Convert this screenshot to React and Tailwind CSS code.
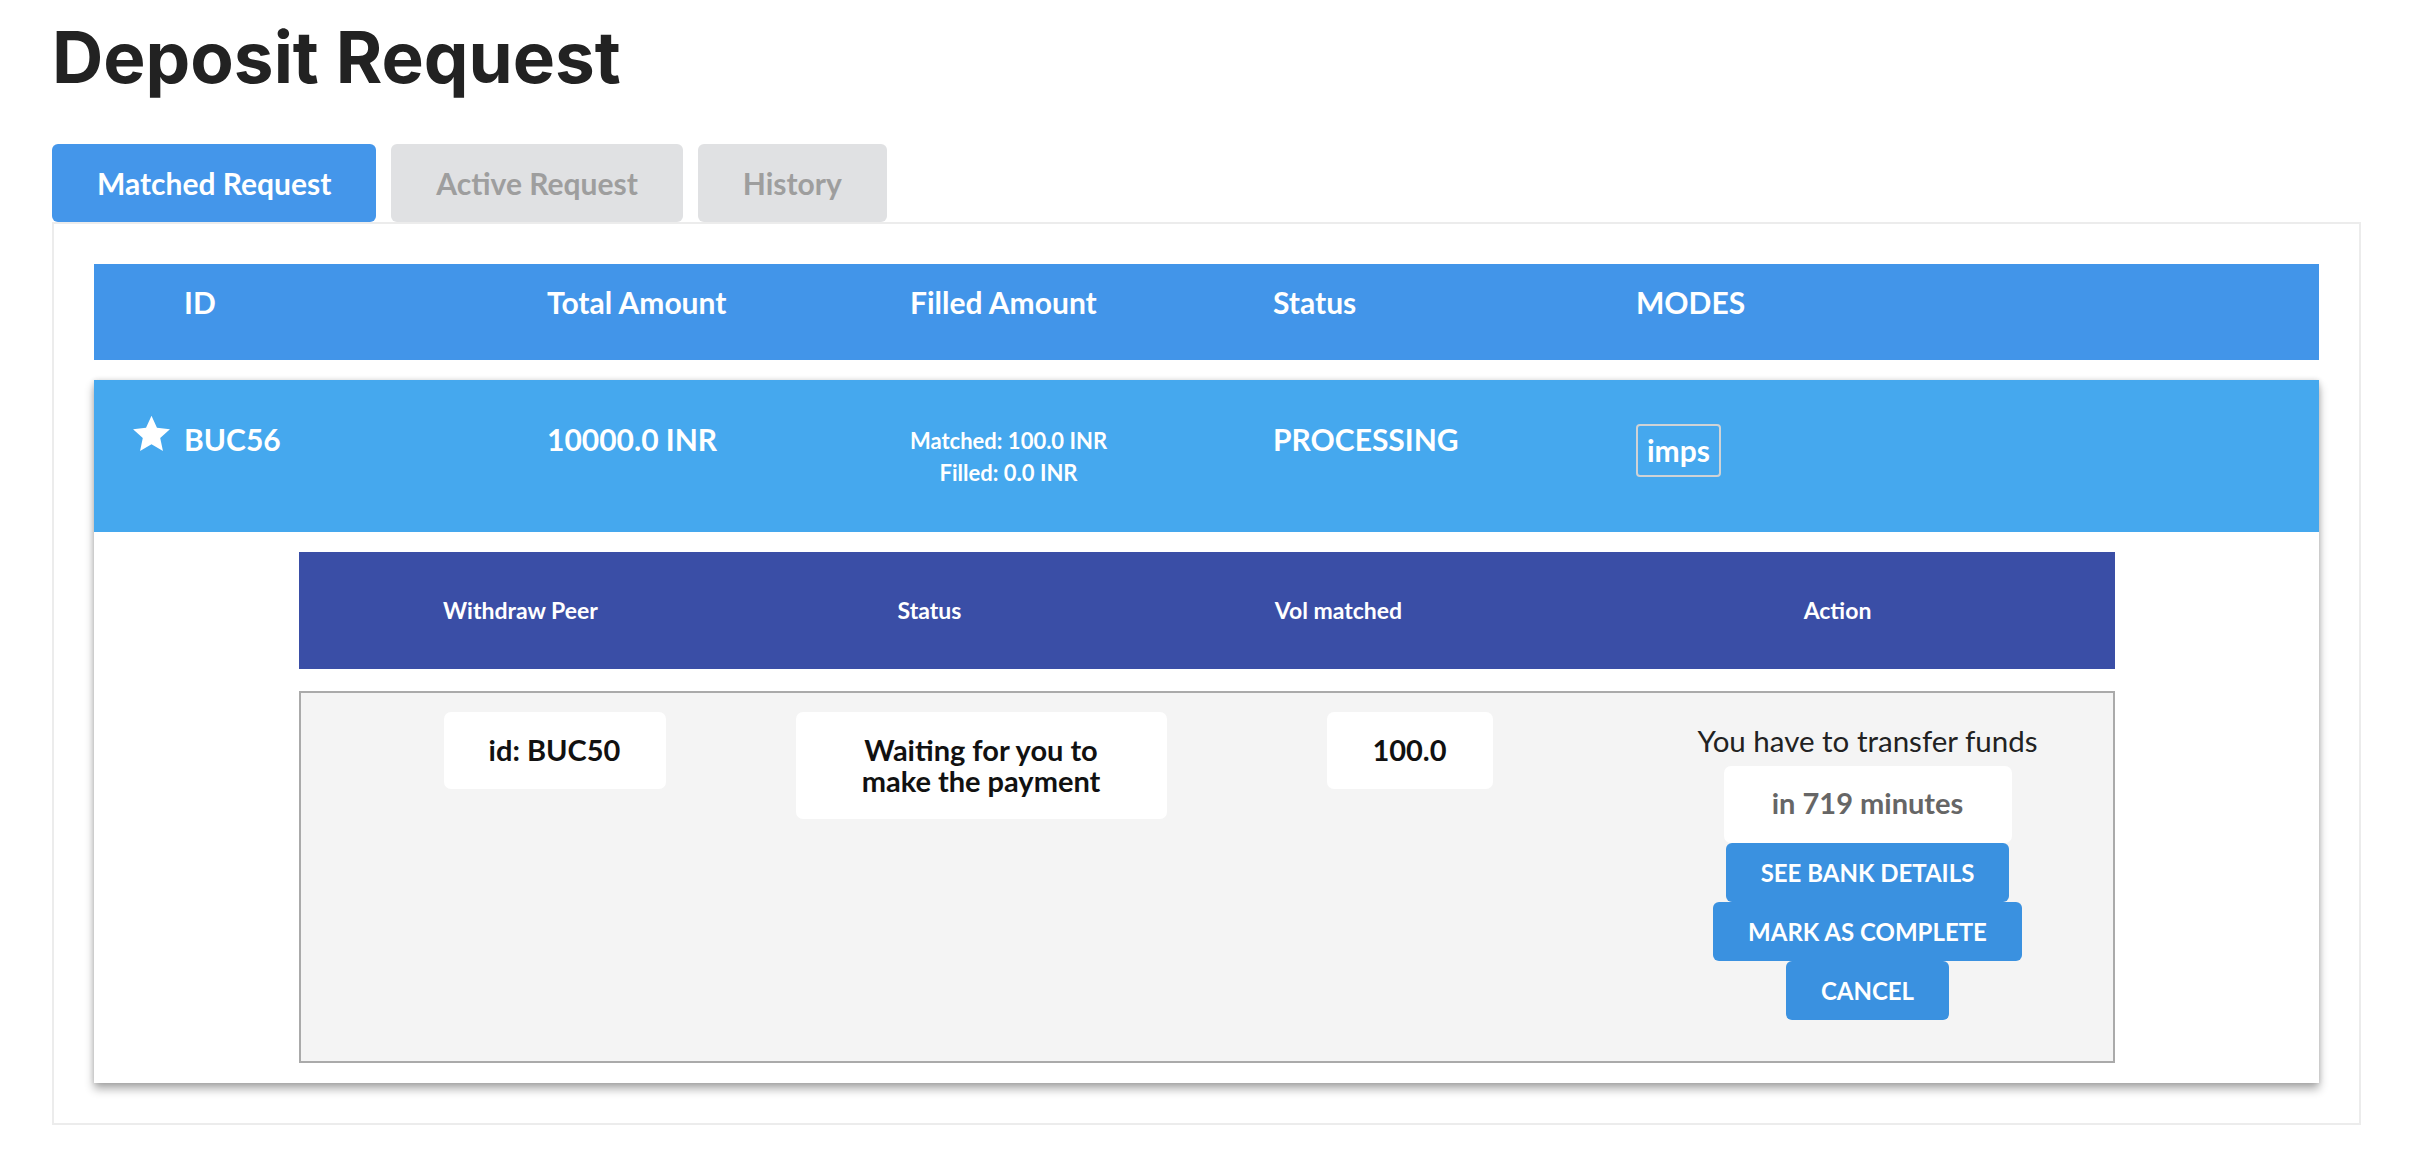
export default function App() {
  const cols = "w-[363px] shrink-0";
  return (
    <div className="min-h-screen bg-white pl-[52px] pr-[71px] pt-[22px] font-['Lato','Liberation_Sans',sans-serif]">
      <h1 className="font-['Inter','Liberation_Sans',sans-serif] text-[71px] font-bold leading-[71px] text-[#222]">
        Deposit Request
      </h1>
      <div className="mt-[51px] flex gap-[15px]">
        <div className="h-[78px] rounded-[6px] bg-[#4496ea] px-[45px] text-[30px] font-bold leading-[78px] text-white">
          Matched Request
        </div>
        <div className="h-[78px] rounded-[6px] bg-[#e0e1e3] px-[45px] text-[30px] font-bold leading-[78px] text-[#9e9e9e]">
          Active Request
        </div>
        <div className="h-[78px] rounded-[6px] bg-[#e0e1e3] px-[45px] text-[30px] font-bold leading-[78px] text-[#9e9e9e]">
          History
        </div>
      </div>
      <div className="border-2 border-[#ececec] bg-white p-[40px]">
        <div className="flex h-[96px] bg-[#4295e9] pl-[38px] pt-[20px] text-[30px] font-bold leading-[36px] text-white">
          <div className="w-[52px] shrink-0" />
          <div className={cols}>ID</div>
          <div className={cols}>Total Amount</div>
          <div className={cols}>Filled Amount</div>
          <div className={cols}>Status</div>
          <div className={cols}>MODES</div>
        </div>
        <div className="mt-[20px] bg-white shadow-[0_6px_9px_rgba(0,0,0,0.32),0_0_5px_rgba(0,0,0,0.14)]">
          <div className="flex h-[152px] bg-[#45a8ee] pl-[38px] pt-[41px] text-[30px] font-bold leading-[36px] text-white">
            <div className="w-[52px] shrink-0">
              <svg viewBox="0 0 24 24" className="-ml-[1px] -mt-[7px] h-[41px] w-[41px]" fill="white">
                <polygon points="12,1 15.2,8.1 22.8,8.9 17.1,14 18.7,21.6 12,17.7 5.3,21.6 6.9,14 1.2,8.9 8.8,8.1" />
              </svg>
            </div>
            <div className={cols}>BUC56</div>
            <div className={cols}>10000.0 INR</div>
            <div className={cols}>
              <div className="mt-[4px] inline-block text-center text-[22px] leading-[32px]">
                <div>Matched: 100.0 INR</div>
                <div>Filled: 0.0 INR</div>
              </div>
            </div>
            <div className={cols}>PROCESSING</div>
            <div className={cols}>
              <span className="mt-[3px] inline-block rounded-[4px] border-2 border-[#cfd3d6] px-[9px] py-[6px] leading-[37px]">
                imps
              </span>
            </div>
          </div>
          <div className="pt-[20px] pb-[20px]">
            <div className="mx-auto grid h-[117px] w-[1816px] grid-cols-[444px_374px_444px_554px] items-center bg-[#3a4ea6] text-center text-[23px] font-bold text-white">
              <div>Withdraw Peer</div>
              <div>Status</div>
              <div>Vol matched</div>
              <div>Action</div>
            </div>
            <div className="mx-auto mt-[22px] flex h-[372px] w-[1816px] items-start border-2 border-[#aaaaaa] bg-[#f4f4f4] pt-[19px]">
              <div className="ml-[143px] w-[222px] shrink-0 rounded-[7px] bg-white pt-[20px] pb-[22px] text-center text-[29px] font-bold leading-[35px] text-[#111]">
                id: BUC50
              </div>
              <div className="ml-[130px] w-[371px] shrink-0 rounded-[7px] bg-white pt-[22px] pb-[23px] text-center text-[29px] font-bold leading-[31px] text-[#111]">
                Waiting for you to
                <br />
                make the payment
              </div>
              <div className="ml-[160px] w-[166px] shrink-0 rounded-[7px] bg-white pt-[20px] pb-[22px] text-center text-[29px] font-bold leading-[35px] text-[#111]">
                100.0
              </div>
              <div className="ml-[195px] flex w-[360px] shrink-0 flex-col items-center pt-[8px]">
                <div className="text-[29.5px] leading-[42px] text-[#222]">You have to transfer funds</div>
                <div className="mt-[4px] w-[288px] rounded-[7px] bg-white pt-[19px] pb-[23px] text-center text-[29px] font-bold leading-[35px] text-[#666]">
                  in 719 minutes
                </div>
                <button className="rounded-[6px] bg-[#3a91e0] px-[35px] py-[15px] text-[24px] font-bold leading-[29px] text-white">
                  SEE BANK DETAILS
                </button>
                <button className="rounded-[6px] bg-[#3a91e0] px-[35px] py-[15px] text-[24px] font-bold leading-[29px] text-white">
                  MARK AS COMPLETE
                </button>
                <button className="rounded-[6px] bg-[#3a91e0] px-[35px] py-[15px] text-[24px] font-bold leading-[29px] text-white">
                  CANCEL
                </button>
              </div>
            </div>
          </div>
        </div>
      </div>
    </div>
  );
}
